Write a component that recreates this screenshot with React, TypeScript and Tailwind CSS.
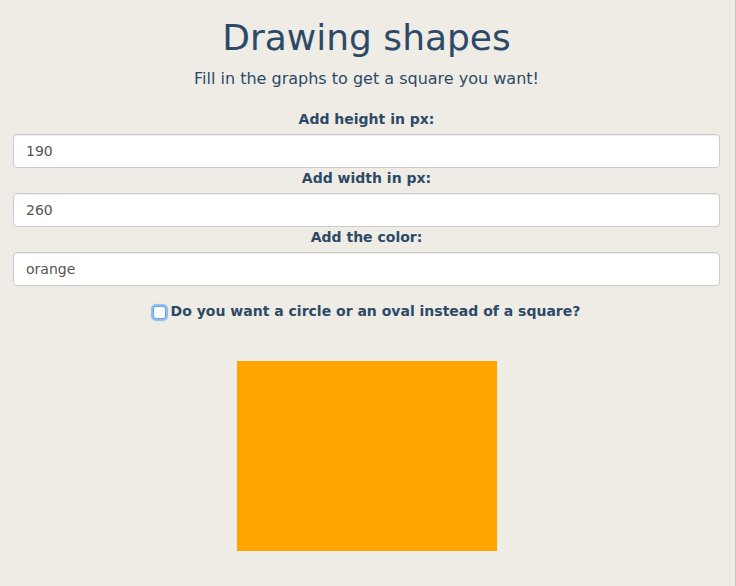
import React from "react";

const font = { fontFamily: '"DejaVu Sans", Verdana, sans-serif' };

function Field({ label, value }: { label: string; value: string }) {
  return (
    <div className="flex flex-col">
      <label className="block text-center text-[14px] font-bold leading-[20px] mb-[5px] text-[#2c4a67]">
        {label}
      </label>
      <div className="h-[34px] bg-white border border-[#cccccc] rounded-[4px] px-[12px] flex items-center text-[14px] text-[#555555] shadow-[inset_0_1px_1px_rgba(0,0,0,0.075)]">
        {value}
      </div>
    </div>
  );
}

export default function App() {
  return (
    <div className="min-h-[586px] w-[736px] bg-[#efece5] flex" style={font}>
      <div className="w-[733px] px-[13px] flex flex-col">
        <h1 className="mt-[18px] text-center text-[36px] leading-[40px] font-normal text-[#2c4a67]">
          Drawing shapes
        </h1>
        <p className="mt-[10px] text-center text-[16px] leading-[22px] text-[#2c4a67]">
          Fill in the graphs to get a square you want!
        </p>
        <div className="mt-[19px] flex flex-col">
          <Field label="Add height in px:" value="190" />
          <Field label="Add width in px:" value="260" />
          <Field label="Add the color:" value="orange" />
        </div>
        <div className="mt-[15px] flex items-center justify-center h-[20px]">
          <span className="mt-[2px] mr-[5px] w-[13px] h-[13px] bg-white rounded-[3px] border border-[#6aa5e8] shadow-[0_0_1px_2px_#8dbcf0]" />
          <span className="text-[14px] font-bold leading-[20px] text-[#2c4a67]">
            Do you want a circle or an oval instead of a square?
          </span>
        </div>
        <div className="mt-[40px] flex justify-center">
          <div className="w-[260px] h-[190px] bg-[#ffa500]" />
        </div>
      </div>
      <div className="w-[2px]" />
      <div className="w-[1px] bg-[#c9c6bf]" />
    </div>
  );
}
